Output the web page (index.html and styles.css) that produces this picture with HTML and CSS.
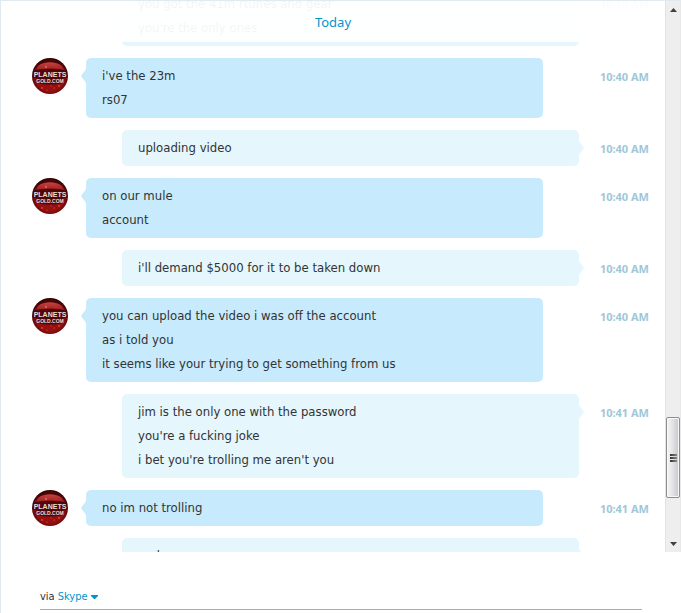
FILE: index.html
```html
<!DOCTYPE html>
<html lang="en">
<head>
  <meta charset="UTF-8">
  <meta name="viewport" content="width=device-width, initial-scale=1.0">
  <title>Chat</title>
  <link rel="stylesheet" href="styles.css">
</head>
<body>

  <!-- Avatar shared by all incoming messages -->
  <svg class="defs" width="0" height="0" aria-hidden="true">
    <defs>
      <radialGradient id="globe" cx="50%" cy="55%" r="52%">
        <stop offset="0" stop-color="#8c1216"></stop>
        <stop offset="0.7" stop-color="#98100f"></stop>
        <stop offset="0.9" stop-color="#6c090b"></stop>
        <stop offset="1" stop-color="#2e0305"></stop>
      </radialGradient>
      <linearGradient id="shine" x1="0" y1="0" x2="0" y2="1">
        <stop offset="0" stop-color="#d8605c" stop-opacity="0.9"></stop>
        <stop offset="1" stop-color="#b83030" stop-opacity="0.5"></stop>
      </linearGradient>
      <symbol id="avatar" viewBox="0 0 36 36">
        <circle cx="18" cy="18" r="18" fill="url(#globe)"></circle>
        <path d="M4 12C7 5 12 2 18 2s11 3 14 10c-7-2-21-2-28 0z" fill="url(#shine)"></path>
        <path d="M6 8C12 3 24 3 30 8C27 3 23 1 18 1S9 3 6 8z" fill="#4a0507"></path>
        <path d="M1 13c9-3 25-3 34 0v6l-5 2v4c-7 2-17 2-24 0v-4l-5-2z" fill="#35070a" opacity="0.75"></path>
        <g fill="#f0442c">
          <circle cx="10" cy="30" r="0.9"></circle>
          <circle cx="15" cy="32" r="0.6"></circle>
          <circle cx="22" cy="30" r="0.7"></circle>
          <circle cx="27" cy="28" r="0.9"></circle>
          <circle cx="19" cy="28" r="0.6"></circle>
          <circle cx="14" cy="9" r="0.7" fill="#ffc0b0"></circle>
        </g>
        <g class="avatar-text">
          <text x="18" y="19" font-size="7">PLANETS</text>
          <text x="18" y="25" font-size="5">GOLD.COM</text>
        </g>
      </symbol>
    </defs>
  </svg>

  <div class="chat">
    <div class="conversation">
      <div class="messages">
        <h1 class="day">Today</h1>
        <div class="message-list">

          <div class="row sent">
            <div class="bubble"><p>you got the 41m rtunes and gear</p><p>you're the only ones</p></div>
            <time>10:40 AM</time>
          </div>

          <div class="row received">
            <svg class="avatar" role="img" aria-label="Planets Gold"><use href="#avatar"></use></svg>
            <div class="bubble"><p>i've the 23m</p><p>rs07</p></div>
            <time>10:40 AM</time>
          </div>

          <div class="row sent">
            <div class="bubble"><p>uploading video</p></div>
            <time>10:40 AM</time>
          </div>

          <div class="row received">
            <svg class="avatar" role="img" aria-label="Planets Gold"><use href="#avatar"></use></svg>
            <div class="bubble"><p>on our mule</p><p>account</p></div>
            <time>10:40 AM</time>
          </div>

          <div class="row sent">
            <div class="bubble"><p>i'll demand $5000 for it to be taken down</p></div>
            <time>10:40 AM</time>
          </div>

          <div class="row received">
            <svg class="avatar" role="img" aria-label="Planets Gold"><use href="#avatar"></use></svg>
            <div class="bubble"><p>you can upload the video i was off the account</p><p>as i told you</p><p>it seems like your trying to get something from us</p></div>
            <time>10:40 AM</time>
          </div>

          <div class="row sent">
            <div class="bubble"><p>jim is the only one with the password</p><p>you're a fucking joke</p><p>i bet you're trolling me aren't you</p></div>
            <time>10:41 AM</time>
          </div>

          <div class="row received">
            <svg class="avatar" role="img" aria-label="Planets Gold"><use href="#avatar"></use></svg>
            <div class="bubble"><p>no im not trolling</p></div>
            <time>10:41 AM</time>
          </div>

          <div class="row sent">
            <div class="bubble"><p>and</p></div>
          </div>

        </div>
      </div>

      <!-- Scrollbar -->
      <div class="scrollbar">
        <button class="scroll-button" aria-label="Scroll up">
          <svg width="7" height="4" viewBox="0 0 7 4"><path d="M0 4L3.500 0L7 4z" fill="#404040"></path></svg>
        </button>
        <div class="track-above"></div>
        <div class="thumb"><span></span><span></span><span></span></div>
        <div class="track-below"></div>
        <button class="scroll-button" aria-label="Scroll down">
          <svg width="7" height="4" viewBox="0 0 7 4"><path d="M0 0h7L3.500 4z" fill="#404040"></path></svg>
        </button>
      </div>
    </div>

    <!-- Message source and input line -->
    <div class="composer">
      <div class="via">
        <label for="service">via</label>
        <select id="service"><option>Skype</option></select>
        <svg width="7" height="4" viewBox="0 0 7 4"><path d="M0 0h7v1L4 4H3L0 1z" fill="#0095cc"></path></svg>
      </div>
      <div class="input-line"></div>
    </div>
  </div>

</body>
</html>
```
FILE: styles.css
```css
/* General styles */
* {
  box-sizing: border-box;
}

body {
  margin: 0;
  background-color: #ffffff;
  color: #333333;
  font-family: 'DejaVu Sans Condensed', 'Noto Sans', sans-serif;
  font-size: 13px;
}

.defs {
  position: absolute;
}

.chat {
  display: flex;
  flex-direction: column;
  height: 100vh;
  overflow: hidden;
  border-top: 1px solid #e0ebf0;
  border-left: 1px solid #e0ebf0;
}

.conversation {
  display: flex;
  flex: 1;
  min-height: 0;
}

/* Messages */
.messages {
  flex: 1;
  overflow: hidden;
}

.day {
  position: relative;
  z-index: 1;
  height: 41px;
  margin: 0;
  background-color: rgba(255, 255, 255, 0.95);
  color: #0095cc;
  font-family: 'Noto Sans', sans-serif;
  font-size: 13px;
  font-weight: 400;
  line-height: 43px;
  text-align: center;
}

.message-list {
  display: flex;
  flex-direction: column;
  gap: 12px;
  margin-top: -56px;
  padding: 0 16px 0 31px;
}

.row {
  display: flex;
  align-items: flex-start;
}

.avatar {
  width: 36px;
  height: 36px;
  margin-right: 18px;
}

.avatar-text {
  fill: #e6dcdc;
  font-family: 'Liberation Sans Narrow', 'Liberation Sans', sans-serif;
  font-weight: 700;
  text-anchor: middle;
}

.bubble {
  position: relative;
  flex: 1;
  padding: 6px 16px;
  border-radius: 5px;
  line-height: 24px;
}

.bubble p {
  margin: 0;
}

.bubble::before {
  content: "";
  position: absolute;
  top: 11px;
  width: 5px;
  height: 14px;
  background-color: inherit;
}

.received .bubble {
  margin-right: 106px;
  background-color: #c7ebfc;
}

.received .bubble::before {
  right: 100%;
  clip-path: polygon(100% 0, 100% 100%, 0 50%);
}

.sent .bubble {
  margin-left: 90px;
  margin-right: 70px;
  background-color: #e5f6fd;
}

.sent .bubble::before {
  left: 100%;
  clip-path: polygon(0 0, 0 100%, 100% 50%);
}

time {
  width: 50px;
  margin-left: -50px;
  color: #a1c7d8;
  font-family: 'Noto Sans', sans-serif;
  font-size: 11px;
  font-weight: 700;
  line-height: 38px;
  height: 36px;
  text-align: right;
  white-space: nowrap;
}

/* Scrollbar */
.scrollbar {
  display: flex;
  flex-direction: column;
  width: 16px;
  background-color: #eeeeee;
  border-left: 1px solid #e3e3e3;
  border-right: 1px solid #e8e8e8;
}

.scroll-button {
  display: flex;
  align-items: center;
  justify-content: center;
  height: 17px;
  padding: 0;
  border: none;
  background: none;
}

.track-above {
  flex: 400;
}

.track-below {
  flex: 37;
}

.thumb {
  display: flex;
  flex-direction: column;
  align-items: center;
  justify-content: center;
  gap: 1px;
  height: 81px;
  border: 1px solid #8e8e8e;
  border-radius: 2px;
  background: linear-gradient(to right, #f6f6f6, #e4e4e6 45%, #c5c6cb);
  box-shadow: inset 0 0 0 1px #f8f8f8;
}

.thumb span {
  width: 7px;
  height: 2px;
  background: linear-gradient(to right, #333333, #8a8a8a);
}

/* Composer */
.composer {
  height: 61px;
  padding: 34px 39px 0;
}

.via {
  display: flex;
  align-items: center;
  gap: 3px;
  height: 23px;
  padding-bottom: 2px;
  font-size: 11px;
}

.via select {
  appearance: none;
  padding: 0;
  border: none;
  background: none;
  color: #0095cc;
  font: inherit;
}

.input-line {
  border-top: 1px solid #66c4ea;
}
```
